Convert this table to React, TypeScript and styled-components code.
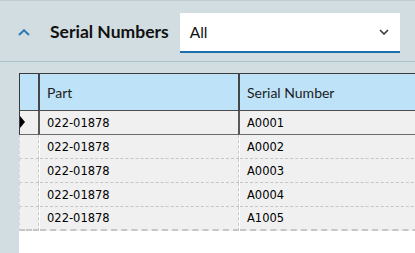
import React, {FC} from "react";
import styled, {createGlobalStyle} from "styled-components";

const GlobalStyle = createGlobalStyle`
  html, body {
    margin: 0;
    padding: 0;
    background: #ffffff;
  }
  body {
    font-family: Lato, "Liberation Sans", sans-serif;
    overflow: hidden;
  }
`

const Page = styled.div`
  width: 415px;
  height: 253px;
  display: flex;
  flex-direction: column;
  background: #d1dde1;
  border-top: 1px solid #c3cdd1;
  box-sizing: border-box;
  overflow: hidden;
`

const TopBar = styled.div`
  height: 61px;
  flex: none;
  display: flex;
  align-items: center;
  padding-left: 18px;
  box-sizing: border-box;
  border-bottom: 1px solid #a8c3cb;
`

const Toggle = styled.button`
  border: 0;
  padding: 0;
  background: transparent;
  display: flex;
  width: 12px;
  height: 7px;
  margin-top: 2px;
  cursor: pointer;
`

const Title = styled.h2`
  margin: 0 0 0 20px;
  font-size: 17.5px;
  font-weight: 700;
  color: #111;
  white-space: nowrap;
`

const SelectBox = styled.div`
  margin-left: 11px;
  margin-top: 3px;
  width: 220px;
  height: 40px;
  box-sizing: border-box;
  background: #ffffff;
  border-bottom: 2px solid #1a70ad;
  display: flex;
  align-items: center;
  justify-content: space-between;
  padding: 0 11px 0 10px;
  font-size: 15.5px;
  color: #111;
`

const Body = styled.div`
  flex: 1;
  display: flex;
  padding: 11px 0 0 19px;
  min-height: 0;
`

const Panel = styled.div`
  flex: 1;
  background: #ffffff;
  overflow: hidden;
`

const Grid = styled.div`
  display: grid;
  grid-template-columns: 21px 200px 200px;
  width: 421px;
`

const HeadCell = styled.div<{ $first?: boolean }>`
  height: 38px;
  box-sizing: border-box;
  background: #bee3f8;
  border-top: 1px solid #3a3a3a;
  border-bottom: 1px solid #4a4a4a;
  border-right: 2px solid #454545;
  border-left: ${p => p.$first ? "1px solid #3a3a3a" : "0"};
  display: flex;
  align-items: center;
  padding-left: 7px;
  font-size: 14px;
  color: #1c1c1c;
`

const Cell = styled.div<{ $current?: boolean; $first?: boolean; $last?: boolean }>`
  height: 24px;
  box-sizing: border-box;
  background: #f0f0f0;
  display: flex;
  align-items: center;
  padding-left: 7px;
  font-family: "DejaVu Sans", sans-serif;
  font-size: 11.5px;
  color: #000;
  position: relative;
  border-bottom: ${p => p.$current ? "1px solid #6a6a6a" : p.$last ? "2px dashed #c6c6c6" : "1px dashed #c6c6c6"};
  border-right: ${p => p.$current ? "2px solid #5a5a5a" : "1px dashed #c6c6c6"};
  border-left: ${p => p.$first ? (p.$current ? "1px solid #3a3a3a" : "1px dashed #d6d6d6") : "0"};
  margin-right: ${p => p.$current ? "0" : "1px"};
`

const Marker = styled.span`
  position: absolute;
  left: 0;
  top: 5px;
  width: 0;
  height: 0;
  border-top: 6px solid transparent;
  border-bottom: 6px solid transparent;
  border-left: 5px solid #000;
`

const rows = [
    {part: "022-01878", serial: "A0001"},
    {part: "022-01878", serial: "A0002"},
    {part: "022-01878", serial: "A0003"},
    {part: "022-01878", serial: "A0004"},
    {part: "022-01878", serial: "A1005"},
]

const App: FC = () => {
    return (
        <>
            <GlobalStyle/>
            <Page>
                <TopBar>
                    <Toggle aria-label="Collapse">
                        <svg width="12" height="7" viewBox="0 0 12 7">
                            <path d="M1 6 L6 1.2 L11 6" fill="none" stroke="#2e7bb6" strokeWidth="2"/>
                        </svg>
                    </Toggle>
                    <Title>Serial Numbers</Title>
                    <SelectBox>
                        <span>All</span>
                        <svg width="10" height="6" viewBox="0 0 10 6">
                            <path d="M1 1 L5 5 L9 1" fill="none" stroke="#333a44" strokeWidth="1.6"/>
                        </svg>
                    </SelectBox>
                </TopBar>
                <Body>
                    <Panel>
                        <Grid>
                            <HeadCell $first/>
                            <HeadCell>Part</HeadCell>
                            <HeadCell>Serial Number</HeadCell>
                            {rows.map((row, i) => {
                                const current = i === 0
                                const last = i === rows.length - 1
                                return (
                                    <React.Fragment key={row.serial}>
                                        <Cell $first $current={current} $last={last}>
                                            {current && <Marker/>}
                                        </Cell>
                                        <Cell $current={current} $last={last}>{row.part}</Cell>
                                        <Cell $current={current} $last={last}>{row.serial}</Cell>
                                    </React.Fragment>
                                )
                            })}
                        </Grid>
                    </Panel>
                </Body>
            </Page>
        </>
    )
}

export default App
